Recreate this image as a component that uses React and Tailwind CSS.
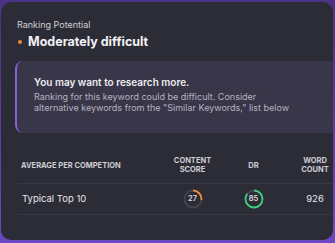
import React from "react";

function Ring({ value, color }) {
  const r = 8.5;
  const c = 2 * Math.PI * r;
  return (
    <div className="relative w-[20px] h-[20px] mx-auto flex items-center justify-center">
      <svg width="20" height="20" viewBox="0 0 20 20" className="absolute inset-0">
        <circle cx="10" cy="10" r={r} fill="none" stroke="#454550" strokeWidth="1.8" />
        <circle
          cx="10"
          cy="10"
          r={r}
          fill="none"
          stroke={color}
          strokeWidth="1.8"
          strokeDasharray={`${(c * value) / 100} ${c}`}
          transform="rotate(-90 10 10)"
        />
      </svg>
      <span className="relative text-[7.5px] font-semibold text-[#dcdce2]">{value}</span>
    </div>
  );
}

export default function App() {
  return (
    <div
      className="w-[335px] h-[243px] overflow-hidden bg-gradient-to-b from-[#4a3284] to-[#6a48c4] pt-[2px] pl-[1px]"
      style={{ fontFamily: "Inter, 'Noto Sans', sans-serif" }}
    >
      <div className="w-[332px] h-[238px] rounded-[10px] bg-[#2c2c36] overflow-hidden pt-[17px]">
        <div className="pl-4">
          <div className="text-[9px] text-[#cfcfd6] leading-[12px]">Ranking Potential</div>
          <div className="flex items-center gap-[6px] mt-[2px]">
            <span className="w-[4px] h-[4px] rounded-full bg-[#f08a3c] ml-[1px]" />
            <span className="text-[12.5px] font-bold text-[#f2f2f5] leading-[18px]">Moderately difficult</span>
          </div>
        </div>

        <div className="ml-[14px] mt-[10px] h-[72px] rounded-l-[8px] border-l-2 border-[#8a5ed6] bg-[#383648] pl-[17px] pt-[15px]">
          <div className="text-[10px] font-semibold text-[#ececf0] leading-[13px]">You may want to research more.</div>
          <div className="text-[9px] text-[#b4b3c1] leading-[11px] mt-[2px]">
            Ranking for this keyword could be difficult. Consider
            <br />
            alternative keywords from the "Similar Keywords," list below
          </div>
        </div>

        <div className="ml-4 mt-[19px]">
          <div className="flex items-center h-[26px] text-[7.5px] font-bold uppercase text-[#cdcdd4] leading-[9px]">
            <div className="w-[150px] shrink-0 pl-1">Average per competion</div>
            <div className="w-[51px] shrink-0 text-center">
              Content
              <br />
              Score
            </div>
            <div className="w-[71px] shrink-0 text-center">DR</div>
            <div className="w-[52px] shrink-0 text-center">
              Word
              <br />
              Count
            </div>
          </div>
          <div className="mt-[5px] border-t border-[#383844]" />
          <div className="flex items-center h-[30px]">
            <div className="w-[150px] shrink-0 pl-[5px] text-[9.5px] text-[#e6e6ea]">Typical Top 10</div>
            <div className="w-[51px] shrink-0">
              <Ring value={27} color="#ee8a3a" />
            </div>
            <div className="w-[71px] shrink-0">
              <Ring value={85} color="#3ecf7a" />
            </div>
            <div className="w-[52px] shrink-0 text-center text-[9.5px] text-[#e6e6ea]">926</div>
          </div>
          <div className="border-t border-[#383844]" />
        </div>
      </div>
    </div>
  );
}
